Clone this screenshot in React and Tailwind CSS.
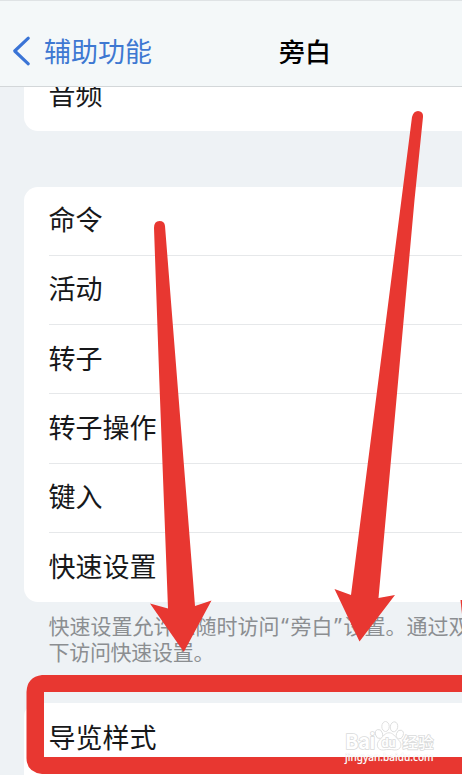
import React from "react";

const commands = [
  { name: "命令", id: "commands" },
  { name: "活动", id: "activities" },
  { name: "转子", id: "rotor" },
  { name: "转子操作", id: "rotor-actions" },
  { name: "键入", id: "typing" },
  { name: "快速设置", id: "quick-settings" },
];

function NavBar() {
  return (
    <header className="z-10 h-[87px] shrink-0 flex items-center border-t border-b border-t-[#dfe3e5] border-b-[#d3d7d9] bg-[#f4f8f9] pt-[14px] pl-[12px]">
      <button className="flex w-[267px] items-center text-[#3e78d2]" aria-label="返回">
        <svg width="20" height="32" viewBox="0 0 20 32" fill="none">
          <path
            d="M16.3 3.2 L2.7 16 L16.3 28.8"
            stroke="#3a74d6"
            strokeWidth="3.1"
            strokeLinecap="round"
            strokeLinejoin="round"
          />
        </svg>
        <span className="ml-[12px] text-[27px] leading-[32px] whitespace-nowrap">辅助功能</span>
      </button>
      <h1 className="text-[26px] leading-[32px] font-medium text-black whitespace-nowrap">旁白</h1>
    </header>
  );
}

function Row({ label, last }) {
  return (
    <li className="h-[69.3px] pl-[25px]">
      <div className={`flex h-full items-center pb-[3px] ${last ? "" : "border-b-[1.5px] border-[#e6e8ea]"}`}>
        <span className="text-[27px] leading-[32px]">{label}</span>
      </div>
    </li>
  );
}

function Marks() {
  return (
    <svg className="absolute inset-0" width="462" height="775" viewBox="0 0 462 775" fill="none">
      <g fill="#e83731">
        <path d="M154 228 Q154 221 159.5 221 Q164.5 221 165 226 L177.2 380 L193 580 L195 606 L211.5 600.5 L183.8 652 L150 603.5 L168 608.5 L159.3 380 Z" />
        <path d="M412 117 Q413.5 111 418 111 Q423.5 111.5 423 117 L414.5 200 L378.5 598 L395 595 L359.5 641.5 L334.5 589 L351 595 L401.4 200 Z" />
        <path d="M460.5 600 L462 600 L462 614 Z" />
        <path
          fillRule="evenodd"
          d="M42 675 H462 V692 H44 V757 H462 V774 H42 Q26 772 26.5 757 V692 Q27 677 42 675 Z"
        />
      </g>
    </svg>
  );
}

function Watermark() {
  return (
    <svg className="absolute left-[340px] top-[716px]" width="100" height="52" viewBox="0 0 100 52">
      <g fill="#fff" stroke="#dcdddd" strokeWidth="0.9">
        <ellipse cx="39" cy="18" rx="3.5" ry="4.6" transform="rotate(-18 39 18)" />
        <ellipse cx="45.5" cy="10.5" rx="3.7" ry="5" />
        <ellipse cx="54" cy="10.8" rx="3.7" ry="5" transform="rotate(10 54 10.8)" />
        <ellipse cx="59.8" cy="18.5" rx="3.4" ry="4.5" transform="rotate(18 59.8 18.5)" />
        <path d="M49 16.8 C53 16.8 55 20.5 58.5 24 C63 28 61 34.5 54.5 34 C51 33.3 47 33.3 43.5 34 C37 34.5 35.5 28 39.5 24 C43 20.5 45 16.8 49 16.8 Z" />
      </g>
      <g className="font-['Inter','Noto_Sans_CJK_SC',sans-serif]" fill="#fff" stroke="#dadbdb" strokeWidth="1.6" paintOrder="stroke">
        <text x="5.5" y="33.3" fontSize="20.5" fontWeight="700" textLength="29.5" lengthAdjust="spacingAndGlyphs">Bai</text>
        <text x="41.5" y="31" fontSize="11.5" fontWeight="700" textLength="14" lengthAdjust="spacingAndGlyphs">du</text>
        <text x="62.5" y="32" fontSize="15.3" fontWeight="500" textLength="31">经验</text>
      </g>
      <text
        className="font-['Noto_Sans',sans-serif]"
        x="5"
        y="44.5"
        fontSize="10"
        fontWeight="500"
        fill="#fff"
        stroke="#bbb"
        strokeOpacity="0.35"
        strokeWidth="0.6"
        paintOrder="stroke"
        textLength="88.5"
      >
        jingyan.baidu.com
      </text>
    </svg>
  );
}

export default function App() {
  return (
    <div className="relative flex h-[775px] w-[462px] flex-col overflow-hidden bg-[#eef2f5] font-['Noto_Sans_CJK_SC',sans-serif] text-[#17181a]">
      <NavBar />
      <main className="flex flex-col pl-[23.5px]">
        {/* the tail of the audio card, partly scrolled under the nav bar */}
        <section className="-mt-[25px] flex h-[69px] items-center rounded-bl-[14px] bg-white pb-[5px] pl-[25px]">
          <span className="text-[27px] leading-[32px]">音频</span>
        </section>

        <ul className="mt-[55.5px] rounded-l-[14px] bg-white">
          {commands.map((item, i) => (
            <Row key={item.id} label={item.name} last={i === commands.length - 1} />
          ))}
        </ul>

        <div className="mt-[11px] pl-[25px] text-[21px] leading-[25px] whitespace-nowrap text-[#8b8e91]">
          <p>
            快速设置允许您随时访问
            <span className="inline-block w-[11px] text-center font-['Noto_Sans',sans-serif]">“</span>
            旁白
            <span className="inline-block w-[11px] text-center font-['Noto_Sans',sans-serif]">”</span>
            设置。通过双
          </p>
          <p className="tracking-[-0.3px]">下访问快速设置。</p>
        </div>

        <section className="mt-[39px] flex h-[73px] items-center rounded-tl-[14px] bg-white pb-[6px] pl-[25px]">
          <span className="text-[27px] leading-[32px]">导览样式</span>
        </section>
      </main>
      <Marks />
      <Watermark />
    </div>
  );
}
